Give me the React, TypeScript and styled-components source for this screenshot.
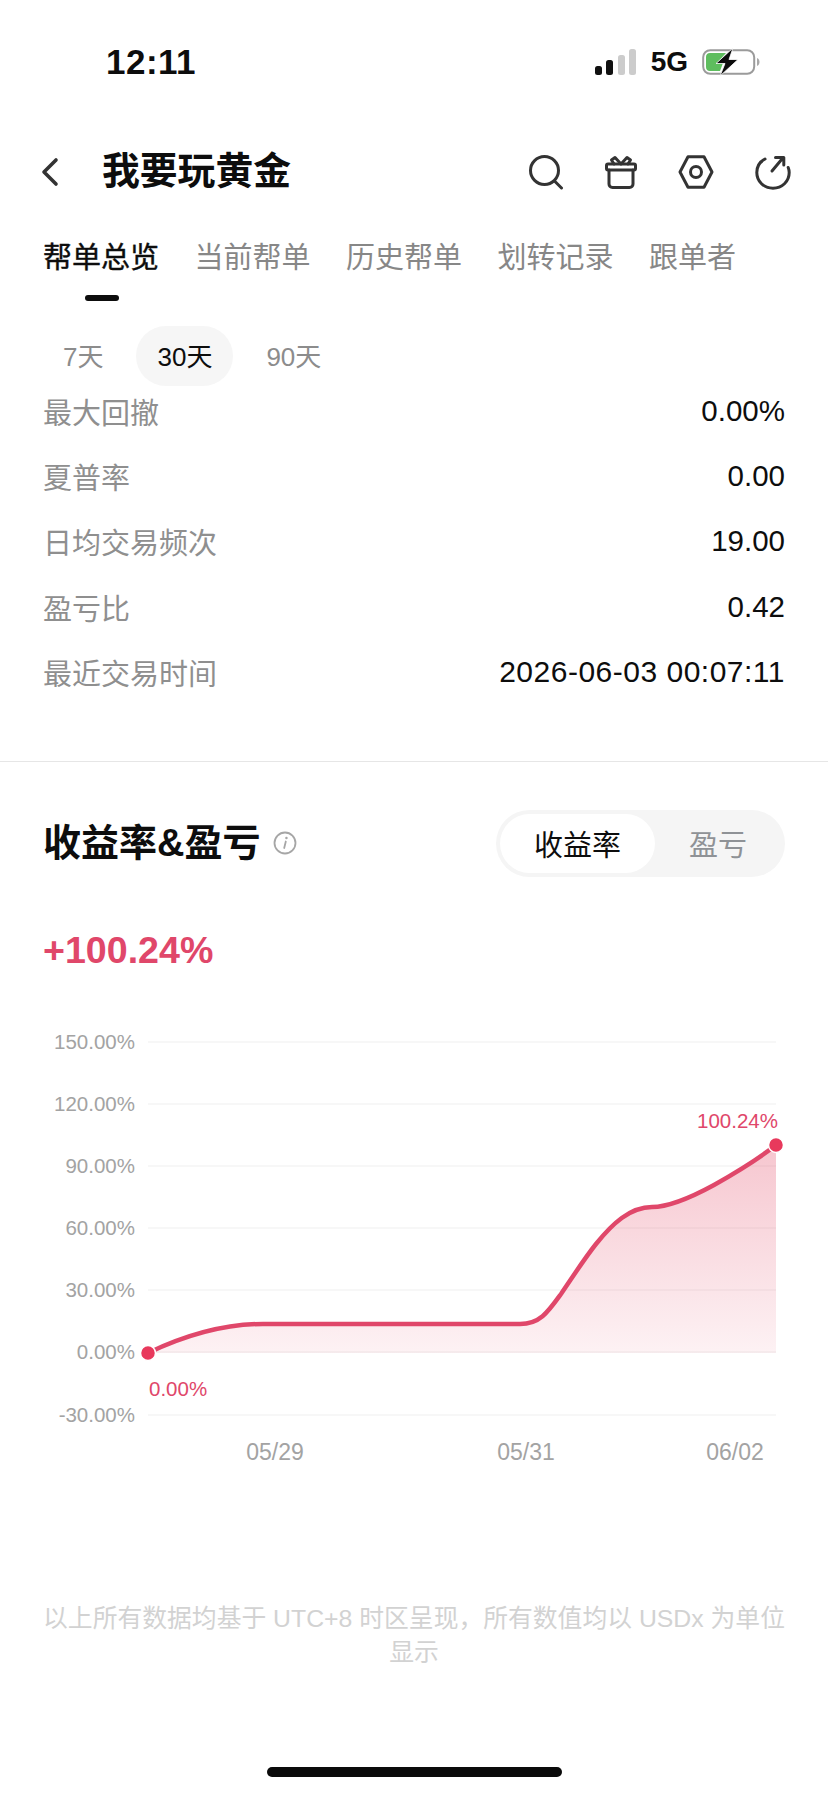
import styled, { createGlobalStyle } from 'styled-components'

const GlobalStyle = createGlobalStyle`
  html, body {
    margin: 0;
    padding: 0;
    background: #fff;
  }
  * {
    box-sizing: border-box;
  }
`

const TABS = ['帮单总览', '当前帮单', '历史帮单', '划转记录', '跟单者']
const RANGES = ['7天', '30天', '90天']
const STATS = [
  { label: '最大回撤', value: '0.00%' },
  { label: '夏普率', value: '0.00' },
  { label: '日均交易频次', value: '19.00' },
  { label: '盈亏比', value: '0.42' },
  { label: '最近交易时间', value: '2026-06-03 00:07:11', wide: true }
]
const Y_AXIS = [
  { label: '150.00%', y: 1042 },
  { label: '120.00%', y: 1104 },
  { label: '90.00%', y: 1166 },
  { label: '60.00%', y: 1228 },
  { label: '30.00%', y: 1290 },
  { label: '0.00%', y: 1352 },
  { label: '-30.00%', y: 1415 }
]
const X_AXIS = [
  { label: '05/29', x: 275 },
  { label: '05/31', x: 526 },
  { label: '06/02', x: 735 }
]
const LINE =
  'M148 1353 C190 1333 230 1324 263 1324 L520 1324 C540 1324 548 1312 561 1294 C572 1278 584 1259 596 1244 C612 1224 630 1207 652 1207 C670 1207 692 1197 714 1185 C737 1172 757 1160 776 1145'

const SignalIcon = () => (
  <svg width="42" height="26" viewBox="0 0 42 26">
    <rect x="0" y="17" width="7" height="9" rx="2.5" fill="#111" />
    <rect x="11" y="11" width="7" height="15" rx="2.5" fill="#111" />
    <rect x="23" y="6" width="7" height="20" rx="2.5" fill="#ccc" />
    <rect x="34" y="0" width="7" height="26" rx="2.5" fill="#ccc" />
  </svg>
)

const BatteryIcon = () => (
  <svg width="58" height="28" viewBox="0 0 58 28">
    <rect x="1.2" y="2.2" width="51" height="23.6" rx="7" fill="#fff" stroke="#9b9b9b" strokeWidth="2" />
    <path d="M55 10 C57 11 57.500 12.500 57.500 14 C57.500 15.500 57 17 55 18 Z" fill="#a8a8a8" />
    <path d="M8 5 H24 L15 15 H21 L18 23 H8 C5.500 23 4 21.500 4 19 V9 C4 6.500 5.500 5 8 5 Z" fill="#5ebd5e" />
    <path d="M31 0 L14 15.500 H23 L18 28 L36 11.500 H27 Z" fill="#0c0c0c" stroke="#fff" strokeWidth="0.800" />
  </svg>
)

const BackIcon = () => (
  <svg width="18" height="30" viewBox="0 0 18 30" fill="none" stroke="#333" strokeWidth="3.6" strokeLinecap="round" strokeLinejoin="round">
    <path d="M15 3 L3 15 L15 27" />
  </svg>
)

const SearchIcon = () => (
  <svg width="36" height="36" viewBox="0 0 36 36" fill="none" stroke="#333" strokeWidth="3" strokeLinecap="round">
    <circle cx="16.5" cy="16.5" r="14" />
    <path d="M26.5 27 L33.5 34" />
  </svg>
)

const GiftIcon = () => (
  <svg width="32" height="34" viewBox="0 0 32 34" fill="none" stroke="#333" strokeWidth="3" strokeLinejoin="round" strokeLinecap="round">
    <rect x="1.5" y="9" width="29" height="6" rx="1.5" />
    <path d="M4 15 V29 C4 31 5.5 32.5 7.5 32.5 H24.5 C26.5 32.5 28 31 28 29 V15" />
    <path d="M16 9 L10 2.5 L6.5 5 L9 9 M16 9 L22 2.5 L25.5 5 L23 9" />
  </svg>
)

const NutIcon = () => (
  <svg width="36" height="34" viewBox="0 0 36 34" fill="none" stroke="#333" strokeWidth="3" strokeLinejoin="round">
    <path d="M10 1.8 H26 L34 17 L26 32.2 H10 L2 17 Z" />
    <circle cx="18" cy="17" r="5.5" />
  </svg>
)

const ShareIcon = () => (
  <svg width="36" height="36" viewBox="0 0 36 36" fill="none" stroke="#333" strokeWidth="3" strokeLinecap="round" strokeLinejoin="round">
    <path d="M10 5 C4.500 8 1.800 13 1.800 18.500 C1.800 27.500 9 34.200 18 34.200 C27 34.200 34.200 27.500 34.200 18.500 C34.200 16.500 33.800 15 33.200 13.500" />
    <path d="M17 17 L27 5 M20.500 3.500 H28.800 V11" />
  </svg>
)

const InfoIcon = () => (
  <svg width="24" height="24" viewBox="0 0 24 24" fill="none" stroke="#a6a6a6" strokeWidth="1.8" strokeLinecap="round">
    <circle cx="12" cy="12" r="10.500" />
    <path d="M12.800 10.500 L11.200 17" />
    <path d="M13.400 7 L13.500 7" strokeWidth="2.400" />
  </svg>
)

const App = () => {
  return (
    <Page>
      <GlobalStyle />
      <StatusBar>
        <Clock>12:11</Clock>
        <StatusRight>
          <SignalIcon />
          <Network>5G</Network>
          <BatteryIcon />
        </StatusRight>
      </StatusBar>

      <Header>
        <BackIcon />
        <Title>我要玩黄金</Title>
        <HeaderIcons>
          <SearchIcon />
          <GiftIcon />
          <NutIcon />
          <ShareIcon />
        </HeaderIcons>
      </Header>

      <Tabs>
        {TABS.map((tab, idx) => (
          <Tab key={tab} active={idx === 0}>
            {tab}
          </Tab>
        ))}
      </Tabs>

      <Ranges>
        {RANGES.map((range, idx) => (
          <Range key={range} active={idx === 1}>
            {range}
          </Range>
        ))}
      </Ranges>

      <Stats>
        {STATS.map((item) => (
          <StatRow key={item.label}>
            <StatLabel>{item.label}</StatLabel>
            <StatValue wide={item.wide}>{item.value}</StatValue>
          </StatRow>
        ))}
      </Stats>

      <Divider />

      <SectionHead>
        <SectionTitle>收益率&amp;盈亏</SectionTitle>
        <InfoIcon />
        <Toggle>
          <ToggleItem active>收益率</ToggleItem>
          <ToggleItem>盈亏</ToggleItem>
        </Toggle>
      </SectionHead>

      <Total>+100.24%</Total>

      <Chart viewBox="0 1020 828 460">
        <defs>
          <linearGradient id="area" x1="0" y1="0" x2="0" y2="1">
            <stop offset="0" stopColor="#e2415f" stopOpacity="0.3" />
            <stop offset="1" stopColor="#e2415f" stopOpacity="0.07" />
          </linearGradient>
        </defs>
        {Y_AXIS.map((tick) => (
          <g key={tick.label}>
            <line x1="148" x2="776" y1={tick.y} y2={tick.y} stroke="#f5f5f5" strokeWidth="1.500" />
            <AxisText x="135" y={tick.y + 7} textAnchor="end">
              {tick.label}
            </AxisText>
          </g>
        ))}
        {X_AXIS.map((tick) => (
          <DateText key={tick.label} x={tick.x} y="1460" textAnchor="middle">
            {tick.label}
          </DateText>
        ))}
        <path d={`${LINE} L776 1353 L148 1353 Z`} fill="url(#area)" />
        <path d={LINE} fill="none" stroke="#e0476a" strokeWidth="4.500" strokeLinecap="round" />
        <circle cx="148" cy="1353" r="7.500" fill="#e8395c" stroke="#fff" strokeWidth="1.500" />
        <circle cx="776" cy="1145" r="7.500" fill="#e8395c" stroke="#fff" strokeWidth="1.500" />
        <PointText x="778" y="1128" textAnchor="end">
          100.24%
        </PointText>
        <PointText x="149" y="1396">
          0.00%
        </PointText>
      </Chart>

      <Footnote>以上所有数据均基于 UTC+8 时区呈现，所有数值均以 USDx 为单位显示</Footnote>

      <HomeBar />
    </Page>
  )
}

export default App

const FONT = `"Liberation Sans", "Noto Sans CJK SC", sans-serif`

const Page = styled.div`
  width: 828px;
  height: 1796px;
  display: flex;
  flex-direction: column;
  overflow: hidden;
  background: #fff;
  color: #0d0d0d;
  font-family: ${FONT};
`

const StatusBar = styled.div`
  height: 128px;
  padding: 0 68px 4px 106px;
  display: flex;
  align-items: center;
  justify-content: space-between;
`

const Clock = styled.span`
  font-size: 35px;
  font-weight: 700;
  letter-spacing: 0.5px;
`

const StatusRight = styled.div`
  display: flex;
  align-items: center;
  gap: 14px;
`

const Network = styled.span`
  font-size: 28px;
  font-weight: 700;
`

const Header = styled.div`
  height: 88px;
  padding: 0 37px 0 41px;
  display: flex;
  align-items: center;
`

const Title = styled.h1`
  margin: 0 0 0 43px;
  font-size: 37.8px;
  font-weight: 700;
  line-height: 1;
`

const HeaderIcons = styled.div`
  margin-left: auto;
  display: flex;
  align-items: center;
  gap: 41px;
`

const Tabs = styled.div`
  height: 84px;
  padding: 0 43px;
  display: flex;
  align-items: center;
  gap: 35.5px;
`

const Tab = styled.div<{ active?: boolean }>`
  position: relative;
  font-size: 29px;
  line-height: 84px;
  color: ${({ active }) => (active ? '#0d0d0d' : '#878787')};
  -webkit-text-stroke: ${({ active }) => (active ? '0.4px #0d0d0d' : '0')};

  &::after {
    content: '';
    display: ${({ active }) => (active ? 'block' : 'none')};
    position: absolute;
    left: 42px;
    bottom: -1px;
    width: 34px;
    height: 6px;
    border-radius: 3px;
    background: #0d0d0d;
  }
`

const Ranges = styled.div`
  margin-top: 26px;
  padding: 0 42px;
  display: flex;
  gap: 12px;
`

const Range = styled.div<{ active?: boolean }>`
  height: 60px;
  padding: 0 21px 4px;
  border-radius: 30px;
  display: flex;
  align-items: center;
  font-size: 26px;
  color: ${({ active }) => (active ? '#0d0d0d' : '#8c8c8c')};
  background: ${({ active }) => (active ? '#f6f6f6' : 'transparent')};
`

const Stats = styled.div`
  padding: 0 43px;
  display: flex;
  flex-direction: column;
  gap: 15.2px;
`

const StatRow = styled.div`
  height: 50px;
  display: flex;
  align-items: center;
  justify-content: space-between;
`

const StatLabel = styled.span`
  font-size: 29px;
  color: #8f8f8f;
`

const StatValue = styled.span<{ wide?: boolean }>`
  font-size: ${({ wide }) => (wide ? '30px' : '29.5px')};
  letter-spacing: ${({ wide }) => (wide ? '0.5px' : '0')};
  color: #0d0d0d;
`

const Divider = styled.div`
  margin-top: 64px;
  height: 1px;
  background: #e6e6e6;
`

const SectionHead = styled.div`
  margin-top: 48px;
  padding: 0 43px;
  display: flex;
  align-items: center;
`

const SectionTitle = styled.h2`
  margin: 0 13px 0 0;
  font-size: 38px;
  font-weight: 700;
  line-height: 1;
`

const Toggle = styled.div`
  margin-left: auto;
  width: 289px;
  height: 67px;
  padding: 4px;
  border-radius: 34px;
  display: flex;
  background: #f5f5f5;
`

const ToggleItem = styled.div<{ active?: boolean }>`
  flex: ${({ active }) => (active ? '0 0 155px' : '1')};
  border-radius: 30px;
  display: flex;
  align-items: center;
  justify-content: center;
  font-size: 29px;
  color: ${({ active }) => (active ? '#0d0d0d' : '#8f9296')};
  background: ${({ active }) => (active ? '#fff' : 'transparent')};
`

const Total = styled.div`
  margin-top: 51px;
  padding: 0 43px;
  font-size: 37.6px;
  font-weight: 700;
  line-height: 44px;
  color: #e0476a;
`

const Chart = styled.svg`
  margin-top: 48px;
  display: block;
  width: 828px;
  height: 460px;
  flex: none;
`

const AxisText = styled.text`
  font-family: ${FONT};
  font-size: 20.5px;
  fill: #a3a3a3;
`

const DateText = styled.text`
  font-family: ${FONT};
  font-size: 23px;
  fill: #a3a3a3;
`

const PointText = styled.text`
  font-family: ${FONT};
  font-size: 20.5px;
  fill: #e0476a;
`

const Footnote = styled.p`
  margin: 122px 0 0;
  padding: 0 40px;
  font-size: 24.8px;
  line-height: 34px;
  text-align: center;
  color: #d2d2d2;
`

const HomeBar = styled.div`
  margin: auto auto 19px;
  width: 295px;
  height: 10px;
  border-radius: 5px;
  background: #0a0a0a;
`
